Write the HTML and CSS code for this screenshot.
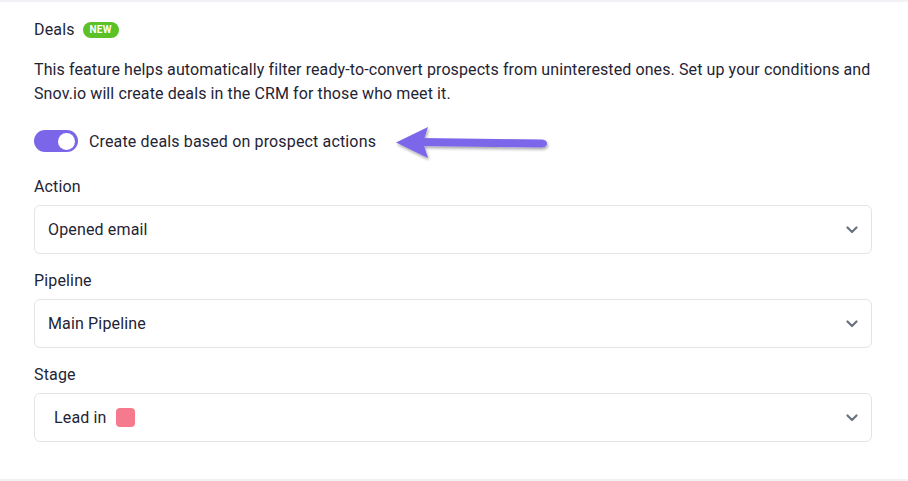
FILE: index.html
```html
<!DOCTYPE html>
<html>
<head>
<meta charset="utf-8">
<link rel="stylesheet" href="styles.css">
</head>
<body>
<div class="panel">
  <div class="title">Deals <span class="badge">NEW</span></div>
  <p class="desc">This feature helps automatically filter ready-to-convert prospects from uninterested ones. Set up your conditions and Snov.io will create deals in the CRM for those who meet it.</p>
  <div class="toggle-row">
    <span class="toggle"><span class="knob"></span></span>
    <span class="toggle-label">Create deals based on prospect actions</span>
    <svg class="arrow" width="170" height="40" viewBox="0 0 170 40">
      <defs>
        <filter id="sh" x="-10%" y="-30%" width="120%" height="160%">
          <feDropShadow dx="1" dy="2" stdDeviation="1.6" flood-color="#000" flood-opacity="0.35"/>
        </filter>
      </defs>
      <g filter="url(#sh)" fill="#7b66e9">
        <path d="M28 14 L150 15.5 Q155 16 155 19.5 Q155 23 150 23.5 L28 22 Z"/>
        <path d="M4 18.5 L36 3 L31 18.5 L36 34 Z"/>
      </g>
    </svg>
  </div>
  <div class="label">Action</div>
  <div class="select"><span>Opened email</span><svg class="chev" width="12" height="8" viewBox="0 0 12 8"><path d="M1.5 1.5 L6 6 L10.5 1.5" fill="none" stroke="#6b7280" stroke-width="2.2" stroke-linecap="round" stroke-linejoin="round"/></svg></div>
  <div class="label">Pipeline</div>
  <div class="select"><span>Main Pipeline</span><svg class="chev" width="12" height="8" viewBox="0 0 12 8"><path d="M1.5 1.5 L6 6 L10.5 1.5" fill="none" stroke="#6b7280" stroke-width="2.2" stroke-linecap="round" stroke-linejoin="round"/></svg></div>
  <div class="label">Stage</div>
  <div class="select stage"><span class="stage-val">Lead in <span class="swatch"></span></span><svg class="chev" width="12" height="8" viewBox="0 0 12 8"><path d="M1.5 1.5 L6 6 L10.5 1.5" fill="none" stroke="#6b7280" stroke-width="2.2" stroke-linecap="round" stroke-linejoin="round"/></svg></div>
</div>
</body>
</html>
```
FILE: styles.css
```css
* { box-sizing: border-box; }
html, body { margin: 0; padding: 0; background: #fff; }
body {
  font-family: Roboto, "Liberation Sans", sans-serif;
  font-size: 16px;
  letter-spacing: 0.15px;
  color: #1f2435;
}
.panel {
  width: 908px;
  height: 481px;
  border-top: 2px solid #f1f2f6;
  border-bottom: 2px solid #f1f2f6;
  padding: 16px 34px 0 34px;
}
.title {
  display: flex;
  align-items: center;
  gap: 8px;
  line-height: 24px;
}
.badge {
  display: inline-flex;
  align-items: center;
  justify-content: center;
  background: #5bc126;
  color: #fff;
  font-size: 10px;
  font-weight: 700;
  letter-spacing: 0.3px;
  height: 16px;
  width: 36px;
  border-radius: 8px;
}
.desc {
  margin: 16px 0 0;
  line-height: 24px;
  letter-spacing: 0.1px;
}
.toggle-row {
  display: flex;
  align-items: center;
  margin-top: 23px;
  height: 24px;
}
.toggle {
  width: 44px;
  height: 22px;
  border-radius: 11px;
  background: #7b66e9;
  display: flex;
  align-items: center;
  justify-content: flex-end;
  padding: 0 3px;
}
.knob {
  width: 17px;
  height: 17px;
  border-radius: 50%;
  background: #fff;
}
.toggle-label { margin-left: 11px; }
.arrow { margin-left: 16px; margin-top: 6px; flex: none; }
.label {
  line-height: 24px;
  margin-top: 22px;
}
.select + .label { margin-top: 15px; }
.select {
  margin-top: 6px;
  height: 49px;
  width: 838px;
  border: 1px solid #e3e4e8;
  border-radius: 6px;
  display: flex;
  align-items: center;
  justify-content: space-between;
  padding: 0 13px 0 13px;
}
.stage { padding-left: 19px; }
.stage-val { display: flex; align-items: center; gap: 9px; }
.swatch {
  width: 19px;
  height: 19px;
  border-radius: 4px;
  background: #f67a8e;
}
.chev { flex: none; }
```
